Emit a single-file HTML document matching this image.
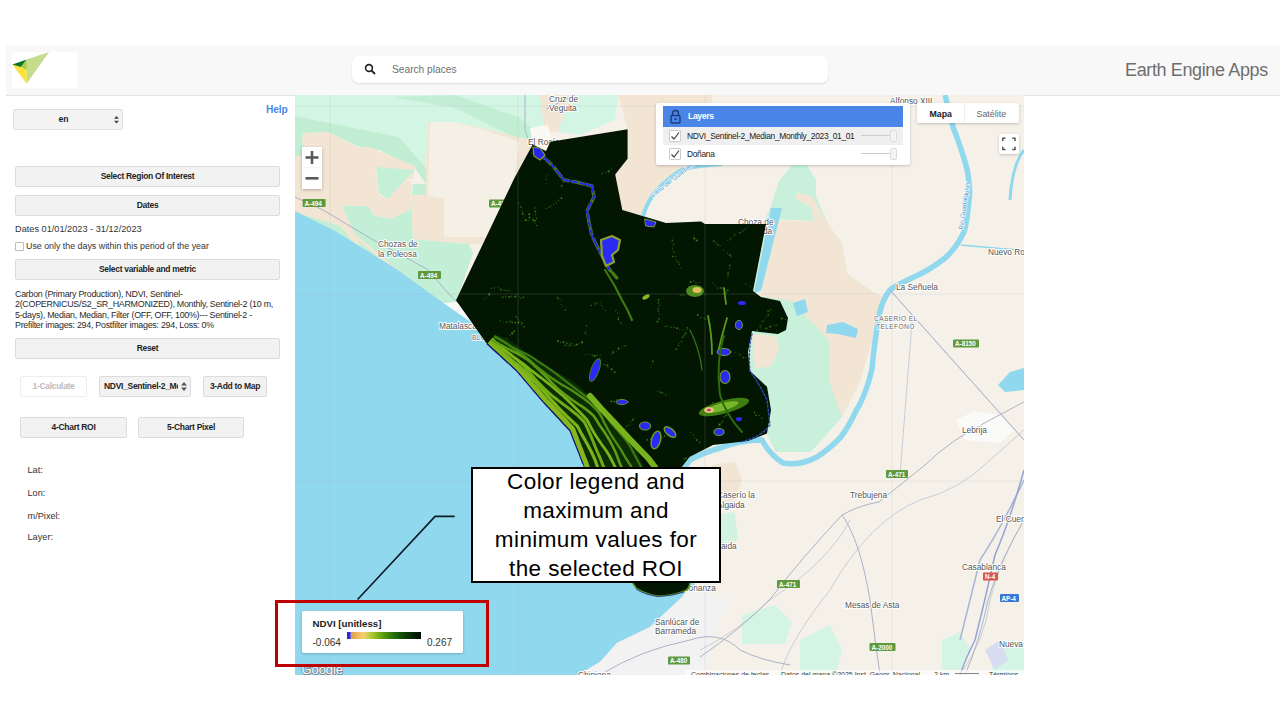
<!DOCTYPE html>
<html><head><meta charset="utf-8">
<style>
*{box-sizing:border-box;}
html,body{margin:0;padding:0;}
body{width:1280px;height:720px;overflow:hidden;position:relative;background:#fff;font-family:"Liberation Sans",sans-serif;color:#222;}
.a{position:absolute;}
#hdr{left:6px;top:45px;width:1274px;height:51px;background:#f8f8f8;border-bottom:1px solid #e2e2e2;}
#logo{left:12px;top:52px;width:65px;height:36px;background:#fff;}
#search{left:352px;top:56px;width:476px;height:27px;background:#fff;border-radius:7px;box-shadow:0 1px 2px rgba(0,0,0,0.12);}
#search .t{left:40px;top:7.5px;font-size:10.2px;color:#707070;}
#eea{left:1125px;top:60px;font-size:18px;color:#6e6e6e;letter-spacing:-0.37px;}
.btn{position:absolute;background:#f2f2f2;border:1px solid #dcdcdc;border-radius:2px;font-weight:bold;font-size:8.5px;letter-spacing:-0.3px;color:#1f1f1f;text-align:center;line-height:19px;white-space:nowrap;overflow:hidden;}
.txt{position:absolute;font-size:9px;color:#333;white-space:nowrap;}
#map{left:295px;top:95px;width:729px;height:580px;overflow:hidden;}
</style></head>
<body>
<div id="hdr" class="a"></div>
<div id="logo" class="a">
<svg width="65" height="36" viewBox="12 52 65 36" style="position:absolute;left:0;top:0">
<polygon points="26.7,59.6 49,52 26.7,83.8" fill="#c3dd8c"/>
<polygon points="12.3,64.6 26.7,62 26.7,83.8" fill="#fde23c"/>
<polygon points="12.3,64.6 26.7,59.6 21,67" fill="#0a7a2a"/>
<polygon points="26.7,59.6 21,67 26.7,70" fill="#a7cc55"/>
</svg>
</div>
<div id="search" class="a">
<svg class="a" style="left:12px;top:7px" width="13" height="13" viewBox="0 0 13 13"><circle cx="5" cy="5" r="3.4" fill="none" stroke="#222" stroke-width="1.6"/><line x1="7.5" y1="7.5" x2="11" y2="11" stroke="#222" stroke-width="1.8"/></svg>
<div class="a t">Search places</div>
</div>
<div id="eea" class="a">Earth Engine Apps</div>

<!-- left panel -->
<div class="btn" style="left:13px;top:109px;width:110px;height:21px;font-size:8.7px;line-height:18px;padding-right:9px;letter-spacing:0;background:#f3f3f3;border-color:#e0e0e0;">en</div>
<svg class="a" style="left:113px;top:115px" width="7" height="10" viewBox="0 0 7 10"><polygon points="3.5,1 6,3.8 1,3.8" fill="#444"/><polygon points="3.5,8.6 6,5.8 1,5.8" fill="#444"/></svg>
<div class="a" style="left:266px;top:103.5px;font-size:10.2px;font-weight:bold;color:#4a86e8;letter-spacing:-0.1px;">Help</div>

<div class="btn" style="left:15px;top:166px;width:265px;height:21px;">Select Region Of Interest</div>
<div class="btn" style="left:15px;top:194.5px;width:265px;height:21px;">Dates</div>
<div class="txt" style="left:15px;top:224px;font-size:9.2px;">Dates 01/01/2023 - 31/12/2023</div>
<div class="a" style="left:15px;top:242px;width:9px;height:9px;border:1px solid #bbb;border-radius:1px;background:#fff;"></div>
<div class="txt" style="left:26px;top:241px;font-size:8.85px;">Use only the days within this period of the year</div>
<div class="btn" style="left:15px;top:259px;width:265px;height:21px;">Select variable and metric</div>
<div class="txt" style="left:15px;top:288.8px;line-height:10.5px;font-size:8.9px;letter-spacing:-0.26px;color:#2a2a2a;">Carbon (Primary Production), NDVI, Sentinel-<br>2(COPERNICUS/S2_SR_HARMONIZED), Monthly, Sentinel-2 (10 m,<br>5-days), Median, Median, Filter (OFF, OFF, 100%)--- Sentinel-2 -<br>Prefilter images: 294, Postfilter images: 294, Loss: 0%</div>
<div class="btn" style="left:15px;top:338px;width:265px;height:21px;">Reset</div>

<div class="btn" style="left:20px;top:376px;width:67px;height:21px;background:#fff;border-color:#eee;color:#bbb;">1-Calculate</div>
<div class="btn" style="left:99px;top:376px;width:92px;height:21px;text-align:left;padding-left:4px;"><div style="width:74px;overflow:hidden;">NDVI_Sentinel-2_Medi</div></div>
<svg class="a" style="left:180px;top:381px" width="8" height="11" viewBox="0 0 8 11"><polygon points="4,1 7,4.5 1,4.5" fill="#555"/><polygon points="4,10 7,6.5 1,6.5" fill="#555"/></svg>
<div class="btn" style="left:203px;top:376px;width:64px;height:21px;">3-Add to Map</div>
<div class="btn" style="left:20px;top:417px;width:107px;height:21px;">4-Chart ROI</div>
<div class="btn" style="left:138px;top:417px;width:106px;height:21px;">5-Chart Pixel</div>

<div class="txt" style="left:27.5px;top:465px;font-size:9.2px;">Lat:</div>
<div class="txt" style="left:27.5px;top:487.5px;font-size:9.2px;">Lon:</div>
<div class="txt" style="left:27.5px;top:510.5px;font-size:9.2px;">m/Pixel:</div>
<div class="txt" style="left:27.5px;top:532px;font-size:9.2px;">Layer:</div>

<!-- MAP -->
<div id="map" class="a">
<svg width="729" height="580" viewBox="295 95 729 580" style="position:absolute;left:0;top:0">
<rect x="295" y="95" width="729" height="580" fill="#f5f1e8"/>

<!-- land patches -->
<polygon fill="#d3f5e3" points="295,95 540,95 545,125 530,140 490,130 455,122 428,122 426,168 399,137 295,116"/>
<polygon fill="#c2efd4" points="393,97 455,95 470,100 520,118 540,135 520,140 455,108"/>
<polygon fill="#c1eed3" points="295,116 399,137 426,168 426,184 415,168 379,150 357,146 328,132 304,133 302,137 304,155 295,157"/>
<polygon fill="#f2e5d3" points="304,133 328,132 357,147 368,147 415,166 413,179 397,179 375,167 379,195 388,199 404,179 412,182 410,210 390,219 373,215 368,206 342,206 364,255 384,270 340,239 295,212 295,157 304,155 302,137"/>
<polygon fill="#c5f0d8" points="376,167 415,170 404,181 388,199 379,193"/>
<polygon fill="#c2efd5" points="342,206 368,206 373,215 390,219 410,210 413,184 426,184 426,195 411,195 413,239 469,244 473,253 456,302 438,304 362,253 340,226 295,212 364,255"/>
<polygon fill="#f2e5d3" points="426,168 428,122 455,122 490,130 530,140 533,145 514,178 504,195 482,244 469,244 413,239 411,195 426,195"/>
<polygon fill="#f5f0e6" points="430,122 455,122 490,132 520,142 514,178 495,237 444,237 444,199 428,195"/>
<polygon fill="#f2e5d3" points="540,95 571,95 560,130 545,135"/>
<polygon fill="#d3f5e3" points="571,95 618,95 615,120 580,135 558,132"/>
<polygon fill="#f2e5d3" points="618,95 712,95 712,167 690,168 665,178 650,195 645,209 640,222 622,210 615,175 628,158 628,130"/>
<polygon fill="#fbf9f4" points="530,128 548,125 552,141 546,151 533,145"/>
<polygon fill="#c9f0da" points="793,165 807,165 815,180 815,221 798,221 776,226 762,261 766,297 749,297 746,333 745,360 748,380 765,390 770,420 767,435 776,452 811,452 842,417 860,381 873,337 882,297 873,292 847,274 842,243 829,226 815,194 805,170"/>
<polygon fill="#c9f0da" points="792,165 807,165 816,180 816,221 771,219 763,260 757,293 752,293 760,230 771,206 779,181"/>
<polygon fill="#f2e5d3" points="797,193 812,196 829,226 842,243 847,274 873,292 882,297 873,337 860,381 842,417 829,381 829,341 793,301 761,296 770,220 813,221 812,208 795,198"/>
<polygon fill="#8fd8ee" points="771,208 782,208 761,291 754,293"/>
<polygon fill="#f2e5d3" points="752,334 776,336 779,350 771,366 755,369"/>
<polygon fill="#8fd8ee" points="793,303 805,299 808,312 797,316"/>
<polygon fill="#8fd8ee" points="827,325 843,322 858,329 856,338 838,334 826,333"/>



<polygon fill="#f5f0e6" points="438,304 456,302 493,336 488,342"/>
<polygon fill="#f8f8f8" points="438,304 456,302 493,336 495,342 470,325"/>
<path d="M340,224 L438,304" stroke="#f2e5d3" stroke-width="3"/>
<!-- bottom green -->
<polygon fill="#f2e5d3" points="712,465 735,462 742,480 735,500 712,505"/><polygon fill="#d3f3e1" points="715,515 735,512 738,540 722,548 712,540"/>
<polygon fill="#d5f5e4" points="742,615 775,605 792,622 785,644 742,644"/>
<polygon fill="#d5f5e4" points="800,640 830,625 842,650 836,675 800,675"/>
<polygon fill="#d5f5e4" points="942,640 960,632 971,650 960,670 942,670"/>
<polygon fill="#d5f5e4" points="992,655 1010,640 1024,642 1024,675 992,675"/>
<polygon fill="#d8dcf0" points="985,650 1000,640 1008,660 995,670"/>
<!-- sea -->
<polygon fill="#8fd8ee" points="295,211 335,231 395,268 442,302 475,325 487,344 516.7,371 543,402 570,431 583,464 596,505 632,582 690,582 700,575 692,584 681,598 650,627 617,643 600,662 578,675 295,675"/>
<polygon fill="#f2f2f2" points="681,598 700,590 730,600 712,640 707,675 578,675 600,662 617,643 650,627"/>
<!-- rivers -->
<path d="M945,95 Q950,115 953,127 Q962,150 967,169 Q971,190 969,200 Q967,222 964,232 Q955,250 945,258 Q930,270 914,277 Q898,284 890,290 Q882,300 879,316 Q874,345 872,369 Q866,395 856,411 Q848,428 840,438 Q828,450 817,457 Q800,466 783,463 Q770,455 762,440 Q740,440 720,448 Q705,452 690,460 Q680,470 685,500 L692,586" fill="none" stroke="#8fd8ee" stroke-width="5.5"/>
<path d="M643,216 Q648,200 657,190 Q668,178 683,169 Q700,165 722,164" fill="none" stroke="#8fd8ee" stroke-width="4"/>
<path d="M1024,150 Q1012,165 1010,200" fill="none" stroke="#8fd8ee" stroke-width="3"/>
<path d="M961,245 Q990,248 1024,250" fill="none" stroke="#8fd8ee" stroke-width="1.5"/>
<polygon fill="#8fd8ee" points="998,385 1010,372 1024,368 1024,390 1005,392"/>
<polygon fill="#fafaf8" points="956,420 975,411 1000,415 1014,430 1000,443 965,440"/>
<path d="M880,290 L840,437" fill="none" stroke="#f2e5d3" stroke-width="0"/>
<path d="M890,290 L1024,440 M912,322 L900,475 M780,675 Q790,640 830,590 Q870,520 920,500 Q960,490 990,460 L1024,430 M1024,520 Q1000,560 990,600 Q985,640 960,675 M700,650 Q740,630 770,600 Q830,560 850,520" fill="none" stroke="#c8cdd8" stroke-width="1"/>
<path d="M1024,480 Q1000,530 980,560 Q970,600 960,640" fill="none" stroke="#a9b5d8" stroke-width="1.5"/>
<!-- roads -->
<g fill="none" stroke="#aab3c8" stroke-width="1">
<path d="M295,197 L323,210 L375,241 L427,269 L448,293 L458,303"/>
<path d="M525,95 L525,130 L529,141 M546,109 L575,95"/>
<path d="M700,657 Q740,630 771,598 Q800,560 842,515 Q860,505 879,502 Q900,485 925,465 Q950,440 990,420 L1024,402"/>
<path d="M842,515 Q860,540 870,600 Q875,640 880,675"/>
<path d="M1024,520 Q1000,560 988,600 Q980,640 965,675"/>
<path d="M890,290 L1024,440"/>
<path d="M600,675 Q640,650 690,640 Q720,630 740,650 Q760,660 790,665"/>
</g>
<path d="M1024,470 Q1010,520 995,555 Q985,600 975,640 Q965,660 960,675" fill="none" stroke="#94a4d8" stroke-width="1.5"/>
<!-- labels -->
<g font-family="Liberation Sans, sans-serif" font-size="8.3" fill="#555" stroke="#fff" stroke-width="2" paint-order="stroke" stroke-linejoin="round">
<text x="549" y="101.5">Cruz de</text><text x="549" y="110.5">Veguita</text>
<text x="528" y="144.5">El Rocío</text>
<text x="890" y="103.5">Alfonso XIII</text>
<text x="378" y="247">Chozas de</text><text x="378" y="256.5">la Poleosa</text>
<text x="439" y="328.5">Matalascañas</text>
<text x="738" y="224.5">Choza de</text><text x="738" y="234">la Vejada</text>
<text x="988" y="254.5">Nuevo Rocío</text>
<text x="896" y="289.5">La Señuela</text>
<text x="962" y="433">Lebrija</text>
<text x="850" y="497.5">Trebujena</text>
<text x="996" y="522">El Cuervo</text>
<text x="962" y="570">Casablanca</text>
<text x="845" y="607.5">Mesas de Asta</text>
<text x="999" y="647">Nueva Jarilla</text>
<text x="717" y="498">Caserío la</text><text x="717" y="507.5">Algaida</text>
<text x="721" y="548.5">aida</text>
<text x="683" y="590.5">Bonanza</text>
<text x="655" y="624.5">Sanlúcar de</text><text x="655" y="634">Barrameda</text>
<text x="578" y="678">Chipiona</text>
</g>
<g font-family="Liberation Sans, sans-serif" font-size="6.6" fill="#666" stroke="#fff" stroke-width="1.6" paint-order="stroke" letter-spacing="0.4">
<text x="874" y="321">CASERÍO EL</text><text x="876" y="328.5">TELEFONO</text>
<text x="472" y="340">BLOQUE</text>
</g>
<g font-family="Liberation Sans, sans-serif" font-size="6.3" font-weight="bold" fill="#fff">
<rect x="302.6" y="199" width="23" height="8" rx="1" fill="#5e9a3c"/><text x="304.5" y="205.5">A-494</text>
<rect x="489" y="199.5" width="23" height="8" rx="1" fill="#5e9a3c"/><text x="491" y="206">A-494</text>
<rect x="418" y="271" width="23" height="8" rx="1" fill="#5e9a3c"/><text x="420" y="277.5">A-494</text>
<rect x="953" y="339.5" width="26" height="8" rx="1" fill="#5e9a3c"/><text x="955" y="346">A-8150</text>
<rect x="886" y="470" width="22" height="8" rx="1" fill="#5e9a3c"/><text x="888" y="476.5">A-471</text>
<rect x="777" y="580" width="23" height="8" rx="1" fill="#5e9a3c"/><text x="779" y="586.5">A-471</text>
<rect x="869.5" y="643" width="26" height="8" rx="1" fill="#5e9a3c"/><text x="871.5" y="649.5">A-2000</text>
<rect x="668" y="656.5" width="22" height="8" rx="1" fill="#5e9a3c"/><text x="670" y="663">A-480</text>
<rect x="983" y="572.5" width="15" height="8" rx="1" fill="#d9534f"/><text x="985" y="579">N-4</text>
<rect x="1000" y="594" width="19" height="8" rx="1" fill="#3a78d8"/><text x="1001.5" y="600.5">AP-4</text>
</g>
<g font-family="Liberation Sans, sans-serif" font-size="6.5" fill="#3c9ad0" stroke="#fff" stroke-width="1" paint-order="stroke">
<text transform="translate(652,198) rotate(-38)">Caño del Guadiamar</text>
<text transform="translate(963,230) rotate(-82)">Rio Guadalquivir</text>
</g>
<!-- NDVI polygon -->
<polygon fill="#021602" points="532.7,144.6 546,151 550.4,141.7 627.6,129.3 627.6,158.7 615.2,174.6 622.3,210 666,223 701,221.4 705,224 766,224 753,291 761,297 780,301 788,318 786,330 778,334 752,331 748,351.8 750,371 767,386.8 771,410 767,433.5 748,441 713,445 689.5,457 678,472 690,560 690,582 632,582 596,505 583,464 570,431 543,402 516.7,371 487,344 456,300.3 514.3,178.2"/>
<g><circle cx="565.9" cy="179.9" r="1.0" fill="#1f5a12"/><circle cx="563.3" cy="182.5" r="0.5" fill="#3a7a18"/><circle cx="561.7" cy="185.9" r="1.1" fill="#1f5a12"/><circle cx="664.7" cy="326.8" r="0.8" fill="#1f5a12"/><circle cx="667.2" cy="326.3" r="0.8" fill="#1f5a12"/><circle cx="671.0" cy="327.4" r="0.8" fill="#1f5a12"/><circle cx="674.1" cy="327.4" r="0.8" fill="#1f5a12"/><circle cx="677.0" cy="328.2" r="1.0" fill="#3a7a18"/><circle cx="679.6" cy="329.6" r="0.7" fill="#184a0e"/><circle cx="683.2" cy="329.8" r="0.5" fill="#2a6a14"/><circle cx="557.2" cy="297.3" r="0.8" fill="#1f5a12"/><circle cx="558.3" cy="298.7" r="0.8" fill="#3a7a18"/><circle cx="561.3" cy="300.8" r="0.7" fill="#184a0e"/><circle cx="561.5" cy="304.3" r="0.5" fill="#3a7a18"/><circle cx="562.4" cy="306.5" r="0.5" fill="#1f5a12"/><circle cx="565.1" cy="309.9" r="0.7" fill="#3a7a18"/><circle cx="585.1" cy="354.9" r="0.5" fill="#3a7a18"/><circle cx="588.9" cy="354.1" r="0.7" fill="#2a6a14"/><circle cx="592.2" cy="355.1" r="0.8" fill="#2a6a14"/><circle cx="594.5" cy="356.1" r="1.0" fill="#3a7a18"/><circle cx="596.9" cy="355.3" r="0.9" fill="#184a0e"/><circle cx="600.1" cy="355.2" r="0.6" fill="#1f5a12"/><circle cx="534.8" cy="208.0" r="0.8" fill="#2a6a14"/><circle cx="535.3" cy="211.5" r="0.9" fill="#2a6a14"/><circle cx="535.7" cy="214.6" r="0.8" fill="#1f5a12"/><circle cx="536.6" cy="218.3" r="0.7" fill="#3a7a18"/><circle cx="535.8" cy="220.4" r="0.5" fill="#3a7a18"/><circle cx="535.2" cy="222.8" r="0.6" fill="#2a6a14"/><circle cx="536.5" cy="225.6" r="0.8" fill="#2a6a14"/><circle cx="582.0" cy="342.4" r="1.1" fill="#3a7a18"/><circle cx="579.2" cy="343.6" r="0.6" fill="#1f5a12"/><circle cx="576.8" cy="344.5" r="1.0" fill="#3a7a18"/><circle cx="572.7" cy="343.5" r="0.6" fill="#184a0e"/><circle cx="570.5" cy="343.9" r="1.1" fill="#184a0e"/><circle cx="568.2" cy="345.7" r="0.8" fill="#184a0e"/><circle cx="565.3" cy="345.4" r="0.8" fill="#2a6a14"/><circle cx="713.8" cy="241.3" r="1.0" fill="#2a6a14"/><circle cx="716.1" cy="243.2" r="0.6" fill="#2a6a14"/><circle cx="717.8" cy="245.1" r="1.0" fill="#1f5a12"/><circle cx="720.0" cy="246.0" r="0.8" fill="#184a0e"/><circle cx="723.2" cy="249.5" r="0.5" fill="#184a0e"/><circle cx="723.9" cy="250.4" r="0.6" fill="#184a0e"/><circle cx="727.2" cy="253.2" r="0.8" fill="#1f5a12"/><circle cx="729.6" cy="254.9" r="1.0" fill="#1f5a12"/><circle cx="730.8" cy="256.0" r="0.8" fill="#2a6a14"/><circle cx="568.0" cy="399.6" r="0.9" fill="#1f5a12"/><circle cx="564.4" cy="398.6" r="0.9" fill="#2a6a14"/><circle cx="562.0" cy="399.9" r="0.9" fill="#3a7a18"/><circle cx="558.8" cy="400.0" r="0.5" fill="#2a6a14"/><circle cx="556.7" cy="400.6" r="0.8" fill="#1f5a12"/><circle cx="554.0" cy="400.3" r="1.0" fill="#2a6a14"/><circle cx="529.1" cy="214.3" r="1.0" fill="#3a7a18"/><circle cx="529.5" cy="217.5" r="0.9" fill="#3a7a18"/><circle cx="532.9" cy="219.4" r="0.8" fill="#2a6a14"/><circle cx="534.1" cy="220.8" r="1.0" fill="#3a7a18"/><circle cx="657.7" cy="391.2" r="0.7" fill="#1f5a12"/><circle cx="660.5" cy="392.2" r="1.0" fill="#1f5a12"/><circle cx="662.2" cy="392.9" r="1.0" fill="#1f5a12"/><circle cx="665.8" cy="395.0" r="0.8" fill="#1f5a12"/><circle cx="658.6" cy="299.9" r="0.8" fill="#3a7a18"/><circle cx="658.5" cy="302.9" r="1.1" fill="#184a0e"/><circle cx="659.6" cy="305.3" r="0.6" fill="#3a7a18"/><circle cx="658.0" cy="308.7" r="0.9" fill="#1f5a12"/><circle cx="658.5" cy="311.3" r="1.0" fill="#184a0e"/><circle cx="659.3" cy="314.2" r="0.6" fill="#184a0e"/><circle cx="659.2" cy="318.8" r="0.9" fill="#2a6a14"/><circle cx="657.5" cy="321.6" r="1.1" fill="#2a6a14"/><circle cx="600.0" cy="302.4" r="0.5" fill="#184a0e"/><circle cx="601.8" cy="305.7" r="0.7" fill="#1f5a12"/><circle cx="603.2" cy="308.1" r="0.6" fill="#1f5a12"/><circle cx="605.4" cy="310.6" r="0.6" fill="#1f5a12"/><circle cx="726.2" cy="415.5" r="0.9" fill="#3a7a18"/><circle cx="724.0" cy="417.1" r="0.8" fill="#2a6a14"/><circle cx="722.4" cy="421.4" r="1.0" fill="#1f5a12"/><circle cx="720.9" cy="423.8" r="0.7" fill="#1f5a12"/><circle cx="719.4" cy="424.7" r="1.1" fill="#3a7a18"/><circle cx="547.9" cy="174.4" r="0.5" fill="#184a0e"/><circle cx="546.2" cy="176.0" r="0.8" fill="#184a0e"/><circle cx="546.0" cy="179.3" r="0.7" fill="#2a6a14"/><circle cx="546.9" cy="183.4" r="0.5" fill="#1f5a12"/><circle cx="697.7" cy="315.0" r="0.9" fill="#3a7a18"/><circle cx="700.8" cy="317.6" r="0.9" fill="#184a0e"/><circle cx="704.2" cy="318.2" r="0.7" fill="#2a6a14"/><circle cx="705.4" cy="319.3" r="0.5" fill="#2a6a14"/><circle cx="708.4" cy="322.6" r="0.6" fill="#3a7a18"/><circle cx="709.8" cy="324.2" r="0.9" fill="#184a0e"/><circle cx="521.2" cy="221.3" r="0.6" fill="#184a0e"/><circle cx="524.2" cy="220.0" r="0.6" fill="#184a0e"/><circle cx="525.9" cy="219.6" r="0.8" fill="#184a0e"/><circle cx="528.6" cy="220.5" r="0.6" fill="#1f5a12"/><circle cx="532.9" cy="219.8" r="0.7" fill="#1f5a12"/><circle cx="558.1" cy="340.9" r="1.0" fill="#3a7a18"/><circle cx="560.7" cy="342.3" r="0.9" fill="#184a0e"/><circle cx="563.5" cy="342.2" r="0.9" fill="#3a7a18"/><circle cx="566.7" cy="343.2" r="1.0" fill="#1f5a12"/><circle cx="569.1" cy="345.5" r="0.6" fill="#2a6a14"/><circle cx="570.9" cy="345.8" r="0.7" fill="#1f5a12"/><circle cx="574.7" cy="345.4" r="0.9" fill="#1f5a12"/><circle cx="680.4" cy="295.3" r="0.9" fill="#1f5a12"/><circle cx="683.3" cy="294.9" r="1.0" fill="#184a0e"/><circle cx="687.9" cy="293.9" r="0.6" fill="#2a6a14"/><circle cx="690.5" cy="294.4" r="0.5" fill="#3a7a18"/><circle cx="694.0" cy="294.1" r="0.9" fill="#1f5a12"/><circle cx="696.5" cy="293.7" r="0.7" fill="#2a6a14"/><circle cx="699.5" cy="295.0" r="0.5" fill="#2a6a14"/><circle cx="701.3" cy="294.2" r="0.9" fill="#1f5a12"/><circle cx="705.6" cy="294.2" r="0.8" fill="#184a0e"/><circle cx="611.2" cy="169.0" r="0.5" fill="#3a7a18"/><circle cx="608.6" cy="171.4" r="1.1" fill="#3a7a18"/><circle cx="605.7" cy="172.6" r="0.5" fill="#2a6a14"/><circle cx="602.2" cy="173.3" r="1.1" fill="#184a0e"/><circle cx="625.3" cy="428.7" r="0.5" fill="#3a7a18"/><circle cx="622.6" cy="430.4" r="0.7" fill="#3a7a18"/><circle cx="622.2" cy="432.6" r="0.7" fill="#3a7a18"/><circle cx="620.7" cy="434.2" r="1.0" fill="#184a0e"/><circle cx="690.9" cy="432.7" r="0.7" fill="#1f5a12"/><circle cx="693.4" cy="434.8" r="0.7" fill="#1f5a12"/><circle cx="694.5" cy="438.0" r="0.6" fill="#2a6a14"/><circle cx="696.8" cy="440.1" r="1.0" fill="#2a6a14"/><circle cx="699.7" cy="442.3" r="1.0" fill="#1f5a12"/><circle cx="664.4" cy="436.1" r="0.8" fill="#3a7a18"/><circle cx="662.6" cy="437.8" r="0.8" fill="#184a0e"/><circle cx="660.0" cy="438.1" r="0.8" fill="#2a6a14"/><circle cx="655.9" cy="438.2" r="0.7" fill="#184a0e"/><circle cx="652.7" cy="439.1" r="0.6" fill="#3a7a18"/><circle cx="650.6" cy="438.9" r="0.8" fill="#3a7a18"/><circle cx="647.3" cy="439.9" r="0.8" fill="#3a7a18"/><circle cx="516.3" cy="316.9" r="0.9" fill="#1f5a12"/><circle cx="518.2" cy="319.1" r="0.7" fill="#2a6a14"/><circle cx="519.7" cy="321.0" r="0.8" fill="#184a0e"/><circle cx="521.3" cy="324.7" r="0.6" fill="#2a6a14"/><circle cx="524.0" cy="326.7" r="0.8" fill="#3a7a18"/><circle cx="560.5" cy="404.0" r="1.1" fill="#3a7a18"/><circle cx="558.4" cy="403.1" r="1.1" fill="#3a7a18"/><circle cx="554.9" cy="403.4" r="0.6" fill="#2a6a14"/><circle cx="553.4" cy="403.8" r="0.6" fill="#3a7a18"/><circle cx="500.4" cy="320.6" r="0.8" fill="#184a0e"/><circle cx="503.7" cy="322.2" r="0.5" fill="#1f5a12"/><circle cx="506.8" cy="322.2" r="0.7" fill="#3a7a18"/><circle cx="510.4" cy="321.4" r="1.1" fill="#184a0e"/><circle cx="512.3" cy="322.4" r="0.8" fill="#2a6a14"/><circle cx="515.2" cy="322.6" r="0.9" fill="#3a7a18"/><circle cx="518.3" cy="322.5" r="1.0" fill="#3a7a18"/><circle cx="522.0" cy="322.9" r="0.9" fill="#2a6a14"/><circle cx="596.3" cy="360.0" r="0.6" fill="#1f5a12"/><circle cx="600.1" cy="360.7" r="0.6" fill="#2a6a14"/><circle cx="601.0" cy="363.4" r="0.6" fill="#184a0e"/><circle cx="604.2" cy="364.8" r="0.8" fill="#2a6a14"/><circle cx="607.3" cy="365.4" r="1.1" fill="#2a6a14"/><circle cx="608.0" cy="367.1" r="0.7" fill="#2a6a14"/><circle cx="611.7" cy="369.2" r="1.0" fill="#3a7a18"/><circle cx="614.5" cy="372.0" r="1.1" fill="#1f5a12"/><circle cx="615.8" cy="372.7" r="0.5" fill="#3a7a18"/><circle cx="675.8" cy="256.4" r="0.7" fill="#1f5a12"/><circle cx="676.8" cy="260.9" r="0.8" fill="#1f5a12"/><circle cx="678.8" cy="262.5" r="1.0" fill="#184a0e"/><circle cx="679.3" cy="264.6" r="0.6" fill="#3a7a18"/><circle cx="680.7" cy="268.2" r="0.7" fill="#184a0e"/><circle cx="593.3" cy="402.7" r="0.7" fill="#1f5a12"/><circle cx="591.8" cy="405.6" r="0.7" fill="#184a0e"/><circle cx="588.7" cy="407.7" r="0.7" fill="#1f5a12"/><circle cx="693.3" cy="236.5" r="0.5" fill="#1f5a12"/><circle cx="694.3" cy="238.6" r="1.1" fill="#3a7a18"/><circle cx="696.6" cy="240.4" r="1.0" fill="#3a7a18"/><circle cx="502.7" cy="297.2" r="0.9" fill="#2a6a14"/><circle cx="505.8" cy="296.6" r="1.0" fill="#184a0e"/><circle cx="509.3" cy="297.0" r="1.0" fill="#3a7a18"/><circle cx="511.6" cy="296.2" r="0.8" fill="#1f5a12"/><circle cx="515.2" cy="296.5" r="1.0" fill="#3a7a18"/><circle cx="519.1" cy="296.8" r="0.6" fill="#1f5a12"/><circle cx="521.0" cy="298.3" r="0.6" fill="#3a7a18"/><circle cx="523.4" cy="297.3" r="0.9" fill="#2a6a14"/><circle cx="734.9" cy="352.8" r="0.7" fill="#184a0e"/><circle cx="738.5" cy="353.8" r="0.6" fill="#2a6a14"/><circle cx="740.3" cy="355.0" r="0.7" fill="#2a6a14"/><circle cx="743.4" cy="357.6" r="0.9" fill="#2a6a14"/><circle cx="745.6" cy="357.6" r="0.6" fill="#1f5a12"/><circle cx="776.2" cy="325.3" r="1.0" fill="#184a0e"/><circle cx="773.6" cy="325.6" r="0.6" fill="#184a0e"/><circle cx="770.1" cy="326.6" r="1.1" fill="#2a6a14"/><circle cx="766.5" cy="328.4" r="1.0" fill="#2a6a14"/><circle cx="765.1" cy="328.4" r="0.6" fill="#184a0e"/><circle cx="561.4" cy="198.2" r="0.9" fill="#3a7a18"/><circle cx="558.4" cy="200.2" r="0.7" fill="#2a6a14"/><circle cx="556.2" cy="202.9" r="0.8" fill="#184a0e"/><circle cx="553.4" cy="204.2" r="0.7" fill="#184a0e"/><circle cx="550.9" cy="206.1" r="0.9" fill="#184a0e"/><circle cx="549.3" cy="207.2" r="0.8" fill="#1f5a12"/><circle cx="546.4" cy="208.4" r="0.7" fill="#1f5a12"/><circle cx="746.0" cy="284.1" r="0.6" fill="#3a7a18"/><circle cx="749.8" cy="286.1" r="0.6" fill="#2a6a14"/><circle cx="751.7" cy="287.8" r="0.6" fill="#1f5a12"/><circle cx="619.0" cy="401.1" r="1.1" fill="#1f5a12"/><circle cx="616.4" cy="399.8" r="0.6" fill="#3a7a18"/><circle cx="613.9" cy="401.4" r="0.9" fill="#2a6a14"/><circle cx="611.2" cy="401.6" r="1.0" fill="#2a6a14"/><circle cx="518.8" cy="203.0" r="0.6" fill="#2a6a14"/><circle cx="520.8" cy="206.9" r="1.0" fill="#1f5a12"/><circle cx="522.0" cy="209.3" r="0.6" fill="#184a0e"/><circle cx="522.5" cy="211.9" r="0.9" fill="#184a0e"/><circle cx="522.8" cy="214.2" r="0.9" fill="#3a7a18"/><circle cx="524.0" cy="217.4" r="0.5" fill="#1f5a12"/><circle cx="526.0" cy="220.3" r="1.0" fill="#3a7a18"/><circle cx="713.3" cy="283.1" r="0.8" fill="#184a0e"/><circle cx="715.2" cy="285.5" r="0.5" fill="#1f5a12"/><circle cx="717.8" cy="288.0" r="1.0" fill="#184a0e"/><circle cx="721.1" cy="287.9" r="0.9" fill="#3a7a18"/><circle cx="724.2" cy="289.5" r="1.1" fill="#1f5a12"/><circle cx="726.6" cy="292.6" r="0.6" fill="#2a6a14"/><circle cx="747.2" cy="227.3" r="0.5" fill="#2a6a14"/><circle cx="745.1" cy="228.9" r="0.7" fill="#2a6a14"/><circle cx="743.1" cy="230.9" r="0.6" fill="#3a7a18"/><circle cx="740.4" cy="232.6" r="0.9" fill="#2a6a14"/><circle cx="738.1" cy="232.9" r="0.5" fill="#184a0e"/><circle cx="734.8" cy="234.5" r="0.9" fill="#184a0e"/><circle cx="733.7" cy="236.2" r="0.6" fill="#184a0e"/><circle cx="730.5" cy="238.8" r="1.1" fill="#184a0e"/><circle cx="727.9" cy="240.2" r="0.7" fill="#1f5a12"/><circle cx="633.6" cy="418.8" r="0.7" fill="#2a6a14"/><circle cx="632.6" cy="419.9" r="0.9" fill="#2a6a14"/><circle cx="630.9" cy="421.8" r="0.7" fill="#184a0e"/><circle cx="628.9" cy="425.2" r="0.9" fill="#184a0e"/><circle cx="626.5" cy="426.1" r="0.9" fill="#184a0e"/><circle cx="600.5" cy="302.5" r="0.5" fill="#1f5a12"/><circle cx="596.6" cy="302.9" r="0.8" fill="#1f5a12"/><circle cx="594.9" cy="304.0" r="0.9" fill="#184a0e"/><circle cx="591.4" cy="305.4" r="0.6" fill="#3a7a18"/><circle cx="690.7" cy="282.1" r="1.0" fill="#3a7a18"/><circle cx="693.8" cy="281.2" r="0.9" fill="#184a0e"/><circle cx="696.0" cy="282.9" r="0.6" fill="#3a7a18"/><circle cx="699.6" cy="282.4" r="0.7" fill="#1f5a12"/><circle cx="537.5" cy="149.9" r="0.6" fill="#2a6a14"/><circle cx="534.3" cy="151.8" r="1.0" fill="#3a7a18"/><circle cx="532.0" cy="153.1" r="0.9" fill="#184a0e"/><circle cx="615.8" cy="310.8" r="0.6" fill="#3a7a18"/><circle cx="617.5" cy="313.2" r="0.6" fill="#1f5a12"/><circle cx="618.4" cy="317.3" r="0.9" fill="#184a0e"/><circle cx="618.3" cy="319.3" r="0.9" fill="#3a7a18"/><circle cx="620.8" cy="322.9" r="0.9" fill="#184a0e"/><circle cx="622.0" cy="324.2" r="0.6" fill="#1f5a12"/><circle cx="754.5" cy="412.5" r="0.7" fill="#3a7a18"/><circle cx="755.9" cy="415.4" r="0.8" fill="#3a7a18"/><circle cx="758.9" cy="415.4" r="0.8" fill="#1f5a12"/><circle cx="761.7" cy="418.3" r="1.0" fill="#184a0e"/><circle cx="586.5" cy="325.7" r="0.9" fill="#1f5a12"/><circle cx="586.0" cy="330.6" r="0.5" fill="#1f5a12"/><circle cx="585.3" cy="332.8" r="0.9" fill="#1f5a12"/><circle cx="585.9" cy="334.6" r="0.6" fill="#184a0e"/><circle cx="770.7" cy="309.8" r="0.6" fill="#3a7a18"/><circle cx="768.2" cy="311.2" r="1.1" fill="#1f5a12"/><circle cx="768.1" cy="315.1" r="1.0" fill="#1f5a12"/><circle cx="766.1" cy="316.8" r="0.6" fill="#1f5a12"/><circle cx="764.9" cy="320.1" r="0.7" fill="#184a0e"/><circle cx="762.7" cy="321.5" r="1.1" fill="#184a0e"/><circle cx="760.5" cy="325.6" r="1.0" fill="#184a0e"/><circle cx="760.1" cy="327.6" r="0.9" fill="#184a0e"/><circle cx="757.5" cy="330.1" r="0.8" fill="#3a7a18"/><circle cx="491.4" cy="288.3" r="0.8" fill="#1f5a12"/><circle cx="494.5" cy="287.9" r="0.7" fill="#2a6a14"/><circle cx="498.4" cy="287.6" r="0.8" fill="#184a0e"/><circle cx="500.8" cy="289.5" r="1.1" fill="#2a6a14"/><circle cx="504.0" cy="290.3" r="0.8" fill="#184a0e"/><circle cx="506.1" cy="290.5" r="0.8" fill="#2a6a14"/><circle cx="509.0" cy="290.5" r="0.8" fill="#1f5a12"/><circle cx="781.8" cy="318.4" r="1.0" fill="#3a7a18"/><circle cx="785.4" cy="319.4" r="0.7" fill="#1f5a12"/><circle cx="652.8" cy="361.2" r="1.0" fill="#2a6a14"/><circle cx="652.0" cy="364.5" r="0.6" fill="#184a0e"/><circle cx="651.0" cy="367.8" r="0.6" fill="#2a6a14"/><circle cx="609.7" cy="427.9" r="0.9" fill="#2a6a14"/><circle cx="613.3" cy="429.9" r="0.6" fill="#184a0e"/><circle cx="614.2" cy="430.9" r="0.6" fill="#1f5a12"/><circle cx="617.1" cy="432.9" r="1.1" fill="#2a6a14"/><circle cx="717.6" cy="377.2" r="0.6" fill="#184a0e"/><circle cx="718.7" cy="378.4" r="1.0" fill="#3a7a18"/><circle cx="719.4" cy="381.7" r="0.8" fill="#184a0e"/><circle cx="719.5" cy="385.4" r="0.5" fill="#3a7a18"/><circle cx="687.3" cy="327.8" r="0.9" fill="#2a6a14"/><circle cx="686.8" cy="330.0" r="0.7" fill="#184a0e"/><circle cx="685.6" cy="333.5" r="1.0" fill="#2a6a14"/><circle cx="684.3" cy="335.7" r="1.0" fill="#184a0e"/><circle cx="682.5" cy="337.2" r="0.8" fill="#3a7a18"/><circle cx="681.5" cy="341.6" r="1.0" fill="#184a0e"/><circle cx="679.6" cy="343.5" r="0.5" fill="#1f5a12"/><circle cx="678.6" cy="345.5" r="0.8" fill="#2a6a14"/><circle cx="676.4" cy="349.0" r="0.9" fill="#2a6a14"/><circle cx="626.1" cy="345.3" r="0.6" fill="#3a7a18"/><circle cx="624.3" cy="346.1" r="0.9" fill="#1f5a12"/><circle cx="621.5" cy="348.1" r="0.7" fill="#184a0e"/><circle cx="618.5" cy="348.4" r="1.0" fill="#3a7a18"/><circle cx="616.4" cy="351.3" r="0.6" fill="#184a0e"/><circle cx="613.2" cy="352.3" r="1.1" fill="#2a6a14"/><circle cx="611.9" cy="353.9" r="0.6" fill="#2a6a14"/><circle cx="712.7" cy="402.5" r="0.7" fill="#2a6a14"/><circle cx="711.4" cy="405.4" r="0.8" fill="#3a7a18"/><circle cx="709.5" cy="407.6" r="1.0" fill="#2a6a14"/><circle cx="708.7" cy="410.8" r="0.7" fill="#2a6a14"/><circle cx="707.2" cy="412.5" r="0.9" fill="#3a7a18"/><circle cx="706.2" cy="416.3" r="0.7" fill="#184a0e"/><circle cx="673.0" cy="237.9" r="0.6" fill="#184a0e"/><circle cx="672.4" cy="240.4" r="1.0" fill="#1f5a12"/><circle cx="673.8" cy="244.2" r="0.8" fill="#2a6a14"/><circle cx="672.8" cy="246.8" r="0.6" fill="#1f5a12"/><circle cx="672.4" cy="249.2" r="0.8" fill="#1f5a12"/><circle cx="674.1" cy="252.0" r="0.7" fill="#3a7a18"/><circle cx="672.9" cy="256.4" r="0.9" fill="#2a6a14"/><circle cx="684.2" cy="459.0" r="0.8" fill="#2a6a14"/><circle cx="685.9" cy="458.3" r="0.9" fill="#3a7a18"/><circle cx="514.2" cy="331.4" r="0.9" fill="#3a7a18"/><circle cx="512.2" cy="333.4" r="1.1" fill="#3a7a18"/><circle cx="509.8" cy="335.3" r="0.9" fill="#184a0e"/><circle cx="506.5" cy="338.4" r="1.0" fill="#184a0e"/><circle cx="489.6" cy="293.1" r="0.7" fill="#2a6a14"/><circle cx="489.1" cy="294.5" r="1.0" fill="#3a7a18"/><circle cx="486.3" cy="297.7" r="0.8" fill="#184a0e"/><circle cx="483.9" cy="299.0" r="0.7" fill="#184a0e"/><circle cx="729.8" cy="265.3" r="0.9" fill="#2a6a14"/><circle cx="729.6" cy="268.3" r="0.9" fill="#184a0e"/><circle cx="728.2" cy="272.6" r="1.0" fill="#1f5a12"/><circle cx="728.0" cy="275.1" r="0.8" fill="#3a7a18"/><circle cx="728.0" cy="277.3" r="0.5" fill="#1f5a12"/><circle cx="727.7" cy="290.4" r="0.9" fill="#3a7a18"/><circle cx="725.2" cy="292.0" r="0.6" fill="#1f5a12"/><circle cx="723.0" cy="293.6" r="0.6" fill="#2a6a14"/></g>
<!-- coastal green belt -->
<polygon fill="#0c2c04" points="487.0,344.0 489.5,346.2 491.9,348.5 494.4,350.8 496.9,353.0 499.4,355.2 501.9,357.5 504.3,359.8 506.8,362.0 509.3,364.2 511.8,366.5 514.2,368.8 516.7,371.0 518.9,373.6 521.1,376.2 523.3,378.8 525.5,381.3 527.7,383.9 529.9,386.5 532.0,389.1 534.2,391.7 536.4,394.2 538.6,396.8 540.8,399.4 543.0,402.0 545.2,404.4 547.5,406.8 549.8,409.2 552.0,411.7 554.2,414.1 556.5,416.5 558.8,418.9 561.0,421.3 563.2,423.8 565.5,426.2 567.8,428.6 570.0,431.0 571.1,433.8 572.2,436.5 573.2,439.2 574.3,442.0 575.4,444.8 576.5,447.5 577.6,450.2 578.7,453.0 579.8,455.8 580.8,458.5 581.9,461.2 583.0,464.0 584.1,467.4 585.2,470.8 586.2,474.2 587.3,477.7 588.4,481.1 589.5,484.5 590.6,487.9 591.7,491.3 592.8,494.8 593.8,498.2 594.9,501.6 596.0,505.0 656.4,485.9 653.9,482.9 651.6,479.8 649.5,476.8 647.5,473.6 645.6,470.5 644.0,467.2 642.4,464.0 641.0,460.6 639.6,457.3 638.3,454.0 636.7,449.9 634.9,445.8 633.0,442.3 630.9,438.8 629.0,436.3 627.0,434.0 624.8,431.6 622.5,429.4 620.1,427.2 617.6,424.9 615.2,422.7 612.8,420.5 608.8,414.3 604.7,408.6 599.5,403.7 594.4,399.2 591.8,397.2 589.2,395.1 586.7,392.9 584.2,390.7 581.8,388.5 579.3,386.3 576.7,384.1 574.1,382.1 571.6,380.4 569.0,378.9 566.3,377.3 563.4,375.8 560.2,374.1 556.9,372.4 553.6,370.8 550.3,369.1 547.1,367.4 543.9,365.7 540.9,363.8 538.0,361.8 534.7,359.2 531.6,356.6 528.4,354.2 525.2,351.7 522.5,349.7 519.9,347.6 517.2,345.6 514.4,343.7 511.6,341.8 508.6,340.1 505.6,338.5 502.4,337.0 499.1,335.7 495.7,334.4"/>
<path d="M489.3,341.5 L491.8,343.7 L494.2,346.0 L496.7,348.2 L499.2,350.5 L501.6,352.8 L504.1,355.0 L506.5,357.3 L509.0,359.6 L511.4,361.9 L513.9,364.2 L516.4,366.5 L518.9,368.9 L521.2,371.5 L523.4,374.2 L525.6,376.8 L527.8,379.4 L529.9,382.0 L532.1,384.6 L534.4,387.1 L536.6,389.7 L538.8,392.2 L541.0,394.8 L543.2,397.3 L545.4,399.9 L547.7,402.2 L549.9,404.6 L552.2,407.0 L554.5,409.4 L556.7,411.8 L559.0,414.2 L561.2,416.6 L563.5,419.0 L565.7,421.5 L567.9,423.9 L570.4,426.5 L572.8,429.2 L574.0,432.3 L575.1,435.3 L576.2,438.1 L577.2,440.9 L578.3,443.6 L579.3,446.4 L580.4,449.1 L581.5,451.9 L582.5,454.7 L583.6,457.4 L584.7,460.2 L585.9,463.0 L587.0,466.4 L588.1,469.9 L589.3,473.3 L590.4,476.7 L591.5,480.1 L592.6,483.5 L593.7,486.9 L594.9,490.3 L596.0,493.7 L597.1,497.1 L598.2,500.6 L599.2,504.0" fill="none" stroke="#86b81e" stroke-width="5.0" stroke-linejoin="round"/>
<path d="M490.0,340.7 L492.4,343.1 L494.8,345.4 L497.2,347.7 L499.7,350.0 L502.2,352.2 L504.7,354.4 L507.2,356.6 L509.8,358.7 L512.4,360.8 L515.0,362.9 L517.8,365.1 L520.5,367.3 L523.0,369.9 L525.6,372.3 L528.1,374.7 L530.5,377.1 L532.9,379.5 L535.2,381.9 L537.6,384.4 L539.9,386.9 L542.1,389.4 L544.3,392.0 L546.5,394.5 L548.6,397.0 L550.8,399.4 L553.0,401.8 L555.2,404.2 L557.4,406.6 L559.7,409.0 L562.0,411.4 L564.3,413.7 L566.7,416.1 L569.1,418.3 L571.5,420.6 L574.4,423.4 L577.4,426.2 L579.2,429.6 L581.0,433.0 L582.5,435.6 L584.0,438.2 L585.4,440.8 L586.9,443.4 L588.3,446.0 L589.7,448.7 L591.1,451.3 L592.4,454.0 L593.7,456.9 L595.0,459.8 L596.3,463.3 L597.5,466.9 L598.6,470.3 L599.7,473.7 L600.8,477.2 L601.8,480.6 L602.9,484.0 L603.9,487.4 L605.0,490.9 L606.1,494.3 L607.3,497.7 L608.5,501.0" fill="none" stroke="#7ab41a" stroke-width="3.2" stroke-linejoin="round"/>
<path d="M490.9,339.7 L493.6,341.7 L496.2,343.8 L498.9,345.9 L501.5,348.0 L504.1,350.0 L506.9,352.0 L509.6,354.0 L512.2,356.0 L514.9,358.1 L517.5,360.2 L520.2,362.6 L522.9,365.0 L525.4,367.7 L527.8,370.5 L530.0,373.1 L532.2,375.6 L534.4,378.2 L536.7,380.7 L539.0,383.2 L541.3,385.6 L543.7,388.1 L546.2,390.4 L548.6,392.7 L551.0,394.9 L553.6,396.9 L556.1,398.8 L558.8,400.9 L561.5,402.9 L564.1,404.9 L566.8,406.9 L569.5,408.9 L572.1,411.0 L574.7,413.0 L577.3,415.2 L580.8,418.4 L584.2,421.9 L586.3,425.9 L588.3,430.2 L589.5,432.9 L590.7,435.6 L591.8,438.3 L592.9,441.0 L594.0,443.8 L595.1,446.5 L596.3,449.2 L597.4,452.0 L598.7,455.0 L600.1,458.0 L601.5,461.6 L602.9,465.2 L604.3,468.5 L605.8,471.8 L607.3,475.1 L608.9,478.3 L610.5,481.6 L612.2,484.8 L613.8,488.1 L615.5,491.3 L617.1,494.5 L618.7,497.8" fill="none" stroke="#70ac18" stroke-width="3.0" stroke-linejoin="round"/>
<path d="M492.0,338.5 L494.3,341.0 L496.8,343.2 L499.4,345.3 L501.9,347.5 L504.5,349.7 L507.0,351.8 L509.6,353.9 L512.3,356.0 L515.0,358.0 L517.7,360.0 L520.7,362.1 L523.8,364.2 L526.6,366.6 L529.5,369.0 L532.2,371.1 L535.0,373.2 L537.8,375.3 L540.5,377.4 L543.3,379.5 L546.0,381.6 L548.8,383.8 L551.4,386.0 L553.9,388.0 L556.4,390.1 L558.8,392.1 L561.2,394.1 L563.6,396.3 L566.1,398.6 L568.4,400.9 L570.8,403.2 L573.1,405.5 L575.5,407.9 L577.8,410.2 L580.1,412.5 L583.6,416.2 L587.1,420.0 L589.4,424.3 L591.7,428.8 L593.2,431.4 L594.7,434.0 L596.3,436.5 L598.0,439.0 L599.7,441.5 L601.4,444.0 L603.2,446.5 L605.0,449.0 L607.0,451.9 L608.9,454.9 L610.8,458.5 L612.7,462.1 L614.3,465.3 L615.9,468.6 L617.5,471.9 L618.9,475.2 L620.3,478.5 L621.7,481.8 L622.9,485.2 L624.2,488.5 L625.4,491.9 L626.6,495.3" fill="none" stroke="#7ab41a" stroke-width="2.8" stroke-linejoin="round"/>
<path d="M491.2,339.4 L494.1,341.2 L497.1,342.9 L500.1,344.6 L503.1,346.2 L506.1,347.8 L509.2,349.4 L512.3,351.0 L515.3,352.6 L518.4,354.2 L521.4,355.9 L524.7,357.9 L528.0,360.0 L531.0,362.6 L534.0,365.2 L536.5,367.5 L539.0,369.8 L541.5,372.2 L543.9,374.6 L546.3,377.0 L548.7,379.4 L551.0,381.9 L553.4,384.3 L555.6,386.5 L557.9,388.8 L560.3,390.8 L562.6,392.7 L565.2,394.8 L567.9,396.9 L570.6,398.9 L573.3,400.8 L576.1,402.7 L579.0,404.6 L581.9,406.4 L584.7,408.3 L589.1,411.8 L593.6,415.8 L596.8,420.5 L599.8,425.6 L601.6,428.1 L603.4,430.6 L605.1,433.1 L606.7,435.6 L608.3,438.2 L609.8,440.7 L611.2,443.4 L612.6,446.0 L614.2,449.3 L615.7,452.5 L617.2,456.4 L618.6,460.2 L619.9,463.6 L621.3,466.9 L622.7,470.2 L624.1,473.5 L625.6,476.8 L627.2,480.1 L628.8,483.3 L630.5,486.5 L632.3,489.7 L634.1,492.9" fill="none" stroke="#5e9e14" stroke-width="2.6" stroke-linejoin="round"/>
<path d="M494.1,336.2 L497.1,337.8 L500.1,339.5 L503.0,341.3 L505.9,343.1 L508.7,345.0 L511.5,346.9 L514.3,348.8 L517.0,350.8 L519.7,352.7 L522.5,354.7 L525.6,357.1 L528.7,359.4 L531.6,362.1 L534.5,364.8 L537.1,367.0 L539.8,369.2 L542.5,371.3 L545.3,373.4 L548.1,375.5 L550.9,377.5 L553.8,379.5 L556.7,381.5 L559.5,383.2 L562.2,384.9 L565.0,386.5 L567.7,388.0 L570.7,389.8 L573.5,391.6 L576.4,393.5 L579.2,395.4 L582.0,397.3 L584.7,399.3 L587.3,401.3 L589.9,403.4 L594.4,407.7 L598.8,412.4 L601.9,417.9 L604.8,423.7 L606.2,426.3 L607.6,428.9 L609.1,431.5 L610.6,434.1 L612.2,436.6 L613.8,439.2 L615.5,441.7 L617.2,444.2 L619.3,447.4 L621.4,450.5 L623.5,454.3 L625.7,458.0 L627.7,461.1 L629.7,464.2 L631.7,467.4 L633.7,470.5 L635.7,473.6 L637.7,476.7 L639.6,479.9 L641.4,483.1 L643.2,486.3 L644.9,489.5" fill="none" stroke="#4e8e12" stroke-width="2.4" stroke-linejoin="round"/>
<path d="M494.1,336.2 L497.0,338.0 L499.9,339.8 L502.8,341.6 L505.7,343.3 L508.7,345.0 L511.7,346.7 L514.8,348.3 L517.8,349.9 L521.0,351.4 L524.1,352.9 L527.8,354.8 L531.4,356.8 L534.9,359.1 L538.3,361.6 L541.3,363.5 L544.3,365.4 L547.2,367.4 L550.1,369.3 L552.9,371.4 L555.7,373.4 L558.5,375.5 L561.2,377.7 L563.7,379.6 L566.1,381.5 L568.5,383.3 L570.9,385.0 L573.5,387.1 L576.2,389.1 L578.8,391.2 L581.5,393.2 L584.2,395.2 L587.0,397.2 L589.7,399.1 L592.5,401.0 L597.5,405.3 L602.5,410.0 L606.3,415.6 L609.9,421.6 L612.0,424.0 L614.0,426.4 L616.1,428.7 L618.2,431.1 L620.2,433.5 L622.3,435.8 L624.3,438.2 L626.2,440.6 L628.5,444.0 L630.7,447.3 L632.7,451.2 L634.7,455.1 L636.5,458.3 L638.1,461.6 L639.8,464.8 L641.4,468.0 L643.0,471.3 L644.6,474.6 L646.2,477.8 L647.8,481.1 L649.5,484.3 L651.1,487.5" fill="none" stroke="#3c7a10" stroke-width="2.2" stroke-linejoin="round"/>
<path d="M487.0,344.0 L489.5,346.2 L491.9,348.5 L494.4,350.8 L496.9,353.0 L499.4,355.2 L501.9,357.5 L504.3,359.8 L506.8,362.0 L509.3,364.2 L511.8,366.5 L514.2,368.8 L516.7,371.0 L518.9,373.6 L521.1,376.2 L523.3,378.8 L525.5,381.3 L527.7,383.9 L529.9,386.5 L532.0,389.1 L534.2,391.7 L536.4,394.2 L538.6,396.8 L540.8,399.4 L543.0,402.0 L545.2,404.4 L547.5,406.8 L549.8,409.2 L552.0,411.7 L554.2,414.1 L556.5,416.5 L558.8,418.9 L561.0,421.3 L563.2,423.8 L565.5,426.2 L567.8,428.6 L570.0,431.0 L571.1,433.8 L572.2,436.5 L573.2,439.2 L574.3,442.0 L575.4,444.8 L576.5,447.5 L577.6,450.2 L578.7,453.0 L579.8,455.8 L580.8,458.5 L581.9,461.2 L583.0,464.0" fill="none" stroke="#1a1a8a" stroke-width="1.1"/>
<path d="M590,396 Q600,408 612,420 Q630,440 648,458 L655,467" fill="none" stroke="#78b21c" stroke-width="6" stroke-linecap="round"/>
<path d="M632,582 L690,582 Q690,590 682,592 Q670,596 658,596 Q645,594 636,588 Z" fill="#021602" stroke="#5a9a18" stroke-width="1.5"/><path d="M636,589 Q645,595 658,596.5 Q672,596 684,592" fill="none" stroke="#2222a0" stroke-width="0.8"/>
<!-- green/yellow spots -->
<g stroke-linecap="round" stroke-linejoin="round">
<!-- El Rocio marsh channel -->
<path d="M536,150 L553,166 L564,180 L576,182 L592,186 L594,197 L587,211 L589,222 L592,236 L600,252 L609,269 L617,278" fill="none" stroke="#4a7a18" stroke-width="3.4" stroke-dasharray="12 3 6 4"/>
<path d="M536,150 L553,166 L564,180 L576,182 L592,186 L594,197 L587,211 L589,222 L592,236 L600,252 L609,269" fill="none" stroke="#2626f0" stroke-width="2" stroke-dasharray="6 2 10 3 4 4"/>
<path d="M533,147 L540,148 L545,155 L540,160 L534,156 Z" fill="#2626f0" stroke="#8a9a30" stroke-width="1.2"/>
<path d="M601,240 L612,236 L620,240 L618,250 L612,255 L614,262 L606,266 L602,256 Z" fill="#2a2af5" stroke="#8aa030" stroke-width="2.2"/>
<path d="M605,270 Q615,285 622,300 Q628,310 632,320" fill="none" stroke="#3c7a10" stroke-width="2.2"/>
<path d="M645,219 L656,222 L654,227 L646,226 Z" fill="#2a2af5" stroke="#7a9a30" stroke-width="1"/>
<!-- yellow spots -->
<ellipse cx="695" cy="291" rx="9" ry="6" fill="#4a8a18"/>
<ellipse cx="697" cy="290" rx="4.5" ry="3" fill="#e0c060"/>
<ellipse cx="646" cy="297" rx="4" ry="2" fill="#8ab82a" transform="rotate(-30 646 297)"/>
<path d="M724,288 L726,304 M708,316 Q712,335 712,354 M727,318 Q722,335 718,352" fill="none" stroke="#5a9a18" stroke-width="1.8"/>
<!-- elongated bright feature -->
<ellipse cx="724" cy="407" rx="26" ry="6.5" fill="#3e7e12" transform="rotate(-15 724 407)"/>
<ellipse cx="722" cy="407" rx="17" ry="3.8" fill="#7ab62a" transform="rotate(-15 722 407)"/>
<ellipse cx="709" cy="410" rx="5" ry="3" fill="#e8c870"/>
<ellipse cx="709" cy="410" rx="2" ry="1.3" fill="#c03090"/>
<!-- blue blobs -->
<ellipse cx="645" cy="426" rx="5.5" ry="4" fill="#2a2af5" stroke="#6a9a28" stroke-width="1.2"/>
<ellipse cx="656" cy="440" rx="4.5" ry="9" fill="#2a2af5" stroke="#6a9a28" stroke-width="1.5" transform="rotate(15 656 440)"/>
<ellipse cx="670" cy="432" rx="7" ry="3.5" fill="#2a2af5" stroke="#6a9a28" stroke-width="1.5" transform="rotate(40 670 432)"/>
<ellipse cx="719" cy="432" rx="5" ry="3.5" fill="#2a2af5" stroke="#6a9a28" stroke-width="1.2"/>
<ellipse cx="724" cy="352" rx="7" ry="3.5" fill="#2a2af5" stroke="#7a9a30" stroke-width="1"/>
<ellipse cx="725" cy="377" rx="5" ry="6.5" fill="#2a2af5" stroke="#6a9a28" stroke-width="1.2"/>
<ellipse cx="739" cy="325" rx="3.5" ry="4.5" fill="#2a2af5" stroke="#6a9a28" stroke-width="1"/>
<ellipse cx="595" cy="370" rx="4" ry="12" fill="#2a2af5" stroke="#4a7a18" stroke-width="1" transform="rotate(20 595 370)"/>
<ellipse cx="622" cy="402" rx="6" ry="2.5" fill="#2a2af5" stroke="#6a8a28" stroke-width="1"/>
<ellipse cx="742" cy="303" rx="4" ry="2" fill="#2a2af5"/>
<ellipse cx="739" cy="419" rx="3" ry="2" fill="#2a2af5"/>
<path d="M752,334 Q748,350 750,371 Q760,385 767,400 L770,425 Q760,438 740,442" fill="none" stroke="#3050c0" stroke-width="1.3" stroke-dasharray="2 2"/>
<path d="M724,336 Q716,360 720,395 Q726,415 742,432" fill="none" stroke="#2e6a10" stroke-width="2"/>
<path d="M690,330 Q700,350 702,370" fill="none" stroke="#2e6a10" stroke-width="1.5"/>
</g>

<!-- tile seams -->
<g stroke="#aab0c0" stroke-opacity="0.25" stroke-width="0.8">
<line x1="330" y1="95" x2="330" y2="675"/><line x1="518" y1="95" x2="518" y2="675"/><line x1="705" y1="95" x2="705" y2="675"/><line x1="892" y1="95" x2="892" y2="675"/>
<line x1="295" y1="106" x2="1024" y2="106"/><line x1="295" y1="294" x2="1024" y2="294"/><line x1="295" y1="481" x2="1024" y2="481"/>
</g>
<!-- MAPSHAPES -->
</svg>

<!-- zoom control -->
<div class="a" style="left:7px;top:52px;width:20px;height:42px;background:#fff;border-radius:0px;box-shadow:0 1px 3px rgba(0,0,0,0.25);">
<svg width="20" height="42" viewBox="0 0 20 42" style="position:absolute;left:0;top:0"><rect x="3.5" y="9.2" width="13" height="2.6" fill="#5a5a5a"/><rect x="8.7" y="4" width="2.6" height="13" fill="#5a5a5a"/><rect x="3" y="20.5" width="14" height="0.7" fill="#e6e6e6"/><rect x="3.5" y="30" width="13" height="2.6" fill="#5a5a5a"/></svg>
</div>
<!-- layers panel -->
<div class="a" style="left:361px;top:8px;width:254px;height:62px;background:#fff;border-radius:2px;box-shadow:0 1px 3px rgba(0,0,0,0.2);">
 <div class="a" style="left:7px;top:3px;width:240px;height:21px;background:#4a86e8;"></div>
 <svg class="a" style="left:14px;top:6px" width="11" height="15" viewBox="0 0 11 15"><path d="M2.5,6.5 V4.5 A3,3 0 0 1 8.5,4.5 V6.5" fill="none" stroke="#1d3a7a" stroke-width="1.4"/><rect x="1" y="6.5" width="9" height="7.5" rx="1" fill="none" stroke="#1d3a7a" stroke-width="1.4"/><circle cx="5.5" cy="10.2" r="1.1" fill="#1d3a7a"/></svg>
 <div class="a" style="left:32px;top:7.5px;font-size:8.6px;font-weight:bold;color:#fff;letter-spacing:-0.35px;">Layers</div>
 <div class="a" style="left:7px;top:24px;width:240px;height:18px;background:#efefef;"></div>
 <div class="a" style="left:13px;top:27px;width:12px;height:12px;background:#fff;border:1px solid #ccc;border-radius:1px;"></div>
 <svg class="a" style="left:13px;top:27px" width="12" height="12" viewBox="0 0 12 12"><path d="M2.5,6.5 L5,9 L10,2.5" fill="none" stroke="#444" stroke-width="1.2"/></svg>
 <div class="a" style="left:31px;top:28px;font-size:8.4px;color:#222;white-space:nowrap;letter-spacing:-0.3px;">NDVI_Sentinel-2_Median_Monthly_2023_01_01</div>
 <div class="a" style="left:205px;top:32px;width:36px;height:1px;background:#ccc;"></div>
 <div class="a" style="left:234px;top:27px;width:7px;height:12px;background:#f4f4f4;border:1px solid #ddd;border-radius:2px;"></div>
 <div class="a" style="left:13px;top:45px;width:12px;height:12px;background:#fff;border:1px solid #ccc;border-radius:1px;"></div>
 <svg class="a" style="left:13px;top:45px" width="12" height="12" viewBox="0 0 12 12"><path d="M2.5,6.5 L5,9 L10,2.5" fill="none" stroke="#444" stroke-width="1.2"/></svg>
 <div class="a" style="left:31px;top:46px;font-size:8.4px;color:#222;letter-spacing:-0.3px;">Doñana</div>
 <div class="a" style="left:205px;top:50px;width:36px;height:1px;background:#ccc;"></div>
 <div class="a" style="left:234px;top:45px;width:7px;height:12px;background:#f4f4f4;border:1px solid #ddd;border-radius:2px;"></div>
</div>
<!-- Mapa / Satelite -->
<div class="a" style="left:622px;top:8px;width:102px;height:20px;background:#fff;border-radius:2px;box-shadow:0 1px 3px rgba(0,0,0,0.2);">
 <div class="a" style="left:12.5px;top:5.5px;font-size:8.8px;font-weight:bold;color:#222;">Mapa</div>
 <div class="a" style="left:47px;top:0px;width:1px;height:20px;background:#eee;"></div>
 <div class="a" style="left:59.5px;top:5.5px;font-size:8.9px;color:#666;">Satélite</div>
</div>
<!-- fullscreen -->
<div class="a" style="left:704px;top:39px;width:20px;height:20px;background:#fff;border-radius:2px;box-shadow:0 1px 3px rgba(0,0,0,0.2);">
<svg width="20" height="20" viewBox="0 0 20 20" style="position:absolute;left:0;top:0"><path d="M3.8,7 V4.3 H6.5 M13.3,4.3 H16 V7 M16,12.7 V15.5 H13.3 M6.5,15.5 H3.8 V12.7" fill="none" stroke="#555" stroke-width="1.5"/></svg>
</div>
<!-- legend -->
<div class="a" style="left:7px;top:516px;width:161px;height:42px;background:#fff;border-radius:2px;box-shadow:0 1px 3px rgba(0,0,0,0.2);">
 <div class="a" style="left:10.5px;top:7px;font-size:9.7px;font-weight:bold;color:#222;">NDVI [unitless]</div>
 <div class="a" style="left:45px;top:21px;width:74px;height:7px;background:linear-gradient(to right,#2020d0 0%,#3030ff 4%,#e0a050 6%,#f8d070 22%,#a8c830 34%,#5ea010 48%,#1e6a08 65%,#0a3a06 80%,#020a02 100%);"></div>
 <div class="a" style="left:10.5px;top:26px;font-size:10px;color:#333;">-0.064</div>
 <div class="a" style="left:125px;top:26px;font-size:10px;color:#333;">0.267</div>
</div>
<div class="a" style="left:6.5px;top:567px;font-size:13px;font-weight:normal;color:#fff;text-shadow:0.8px 0 0 #7a8a90,-0.8px 0 0 #7a8a90,0 0.8px 0 #7a8a90,0 -0.8px 0 #7a8a90,0.6px 0.6px 0 #7a8a90;letter-spacing:-0.1px;">Google</div>
<div class="a" style="left:390px;top:575px;width:339px;height:6px;background:rgba(255,255,255,0.65);"></div>
<div class="a" style="left:396px;top:576px;font-size:7px;color:#444;white-space:nowrap;">Combinaciones de teclas</div>
<div class="a" style="left:486px;top:576px;font-size:7px;color:#444;white-space:nowrap;">Datos del mapa ©2025 Inst. Geogr. Nacional</div>
<div class="a" style="left:639px;top:576px;font-size:7px;color:#444;white-space:nowrap;">2 km</div>
<div class="a" style="left:660px;top:578px;width:24px;height:1px;background:#888;"></div>
<div class="a" style="left:694px;top:576px;font-size:7px;color:#444;white-space:nowrap;">Términos</div>
<!-- MAPCONTROLS -->
</div>


<div class="a" style="left:471px;top:467px;width:250px;height:116px;background:#fff;border:2px solid #000;"></div>
<div class="a" style="left:471px;top:467px;width:250px;height:116px;text-align:center;font-size:22.5px;line-height:29px;color:#000;padding-top:0px;letter-spacing:0.4px;">Color legend and<br>maximum and<br>minimum values for<br>the selected ROI</div>
<svg class="a" style="left:0;top:0" width="1280" height="720" viewBox="0 0 1280 720"><polyline points="357.6,599.5 435.1,516.4 454.7,516.4" fill="none" stroke="#0d1b26" stroke-width="1.6"/></svg>
<div class="a" style="left:275px;top:600px;width:214px;height:67px;border:3px solid #c00000;"></div>
<!-- ANNOTATIONS -->
</body></html>
